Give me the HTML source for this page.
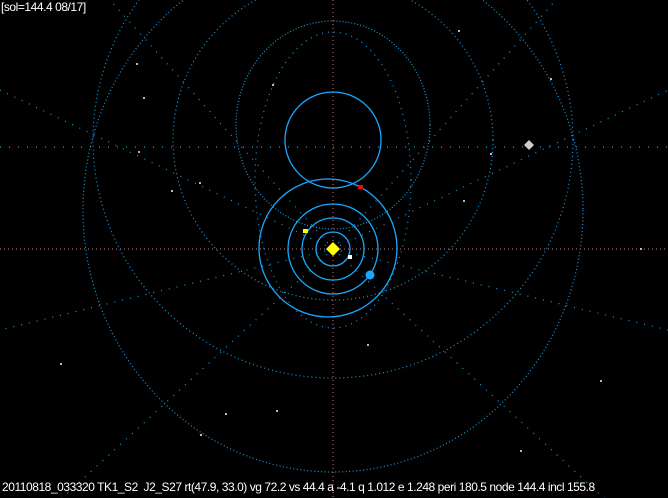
<!DOCTYPE html>
<html><head><meta charset="utf-8"><style>
html,body{margin:0;padding:0;background:#000;width:668px;height:498px;overflow:hidden}
svg{position:absolute;left:0;top:0}
.t{position:absolute;color:#fff;font-family:"Liberation Sans","Noto Sans CJK JP",sans-serif;font-size:12px;letter-spacing:-0.45px;white-space:nowrap}
</style></head><body>
<svg width="668" height="498" viewBox="0 0 668 498">
<g fill="none" stroke="#1a9be0" stroke-width="1.2" stroke-dasharray="1 5">
<ellipse cx="333" cy="125" rx="97" ry="104" stroke-dasharray="1 2"/>
<ellipse cx="333" cy="140" rx="160" ry="160" stroke-dasharray="1 3"/>
<ellipse cx="333" cy="210" rx="250" ry="262" stroke-dasharray="1 2.5"/>
<ellipse cx="333" cy="140" rx="240" ry="238" stroke-dasharray="1 3"/>
<ellipse cx="333" cy="180" rx="78" ry="148"/>
<path d="M333 249 L60 500 M333 249 L606 500 M333 249 L0 330 M333 249 L668 330 M333 249 L0 90 M333 249 L668 90 M333 249 L110 0 M333 249 L556 0" stroke-dasharray="1 7"/>
<path d="M0 147 L668 147" stroke-dasharray="1 8"/>
</g>
<g stroke="#c87878" stroke-width="1" stroke-dasharray="1 3">
<path d="M333 0 V498"/><path d="M0 249 H668"/>
</g>
<g fill="none" stroke="#1aa8ff" stroke-width="1.3">
<circle cx="333" cy="140" r="48"/>
<circle cx="328" cy="248" r="69"/>
<circle cx="333" cy="249" r="45"/>
<circle cx="333" cy="249" r="31"/>
<circle cx="333" cy="249" r="17"/>
</g>
<polygon points="333,242 340,249 333,256 326,249" fill="#ffff00"/>
<rect x="303" y="229" width="5" height="4" fill="#ffff00"/>
<rect x="348" y="255" width="4" height="4" fill="#fff"/>
<rect x="358" y="185" width="5" height="4" fill="#e01010"/>
<circle cx="370" cy="275" r="4.5" fill="#1aa8ff"/>
<polygon points="529,140 534,145 529,150 524,145" fill="#ccc"/>
<g fill="#bbb">
<rect x="136" y="63" width="2" height="2"/><rect x="143" y="97" width="2" height="2"/><rect x="138" y="151" width="2" height="2"/>
<rect x="171" y="190" width="2" height="2"/><rect x="199" y="182" width="2" height="2"/><rect x="272" y="84" width="2" height="2"/>
<rect x="367" y="344" width="2" height="2"/><rect x="225" y="413" width="2" height="2"/><rect x="200" y="434" width="2" height="2"/>
<rect x="458" y="30" width="2" height="2"/><rect x="490" y="153" width="2" height="2"/><rect x="463" y="200" width="2" height="2"/>
<rect x="550" y="78" width="2" height="2"/><rect x="640" y="248" width="2" height="2"/><rect x="276" y="410" width="2" height="2"/>
<rect x="520" y="450" width="2" height="2"/><rect x="600" y="380" width="2" height="2"/><rect x="60" y="363" width="2" height="2"/>
</g>
</svg>
<div class="t" style="left:1px;top:0px">[sol=144.4 08/17]</div>
<div class="t" style="left:2px;top:480px">20110818_033320 TK1_S2&nbsp; J2_S27 rt(47.9, 33.0) vg 72.2 vs 44.4 a -4.1 q 1.012 e 1.248 peri 180.5 node 144.4 incl 155.8</div>
</body></html>
